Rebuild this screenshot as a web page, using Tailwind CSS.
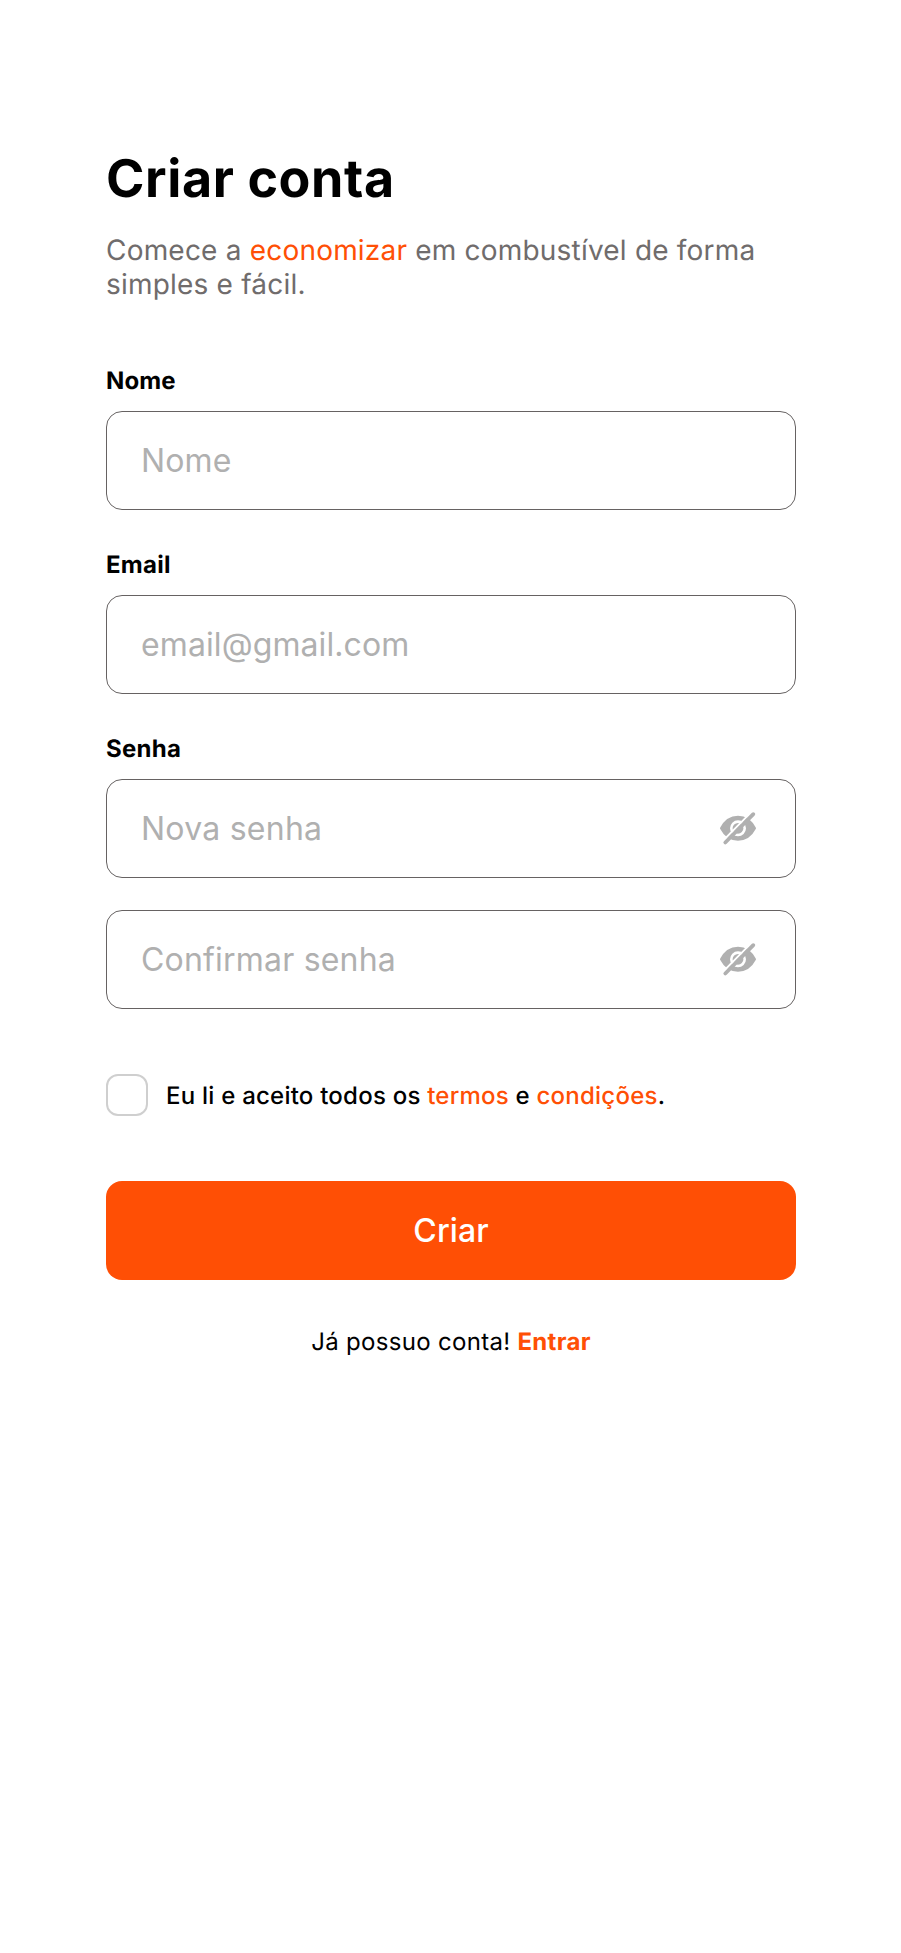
<!DOCTYPE html>
<html lang="pt-BR">
<head>
<meta charset="utf-8">
<title>Criar conta</title>
<script src="https://cdn.jsdelivr.net/npm/@tailwindcss/browser@4"></script>
</head>
<body class="bg-white font-['Inter',sans-serif] text-black [text-rendering:geometricPrecision]">
<main class="flex min-h-[1953px] flex-col pt-[147px] pr-[105px] pl-[106px]">
  <h1 class="w-fit text-[52px] leading-[63px] font-bold tracking-[0.6px]">Criar conta</h1>
  <p class="mt-[23px] w-[670px] text-[28px] leading-[34px] tracking-[0.2px] text-[#706c6c]">Comece a <span class="text-[#ff4f05]">economizar</span> em combustível de forma simples e fácil.</p>
  <form class="mt-[65px] flex flex-col">
    <label class="flex flex-col gap-4 text-[24px] leading-[29px] font-bold tracking-[0.15px]">Nome
      <input class="h-[99px] rounded-2xl border border-[#666262] px-[34px] text-[32px] font-normal tracking-[0.15px] placeholder:text-[#b0b0b0]" placeholder="Nome">
    </label>
    <label class="mt-10 flex flex-col gap-4 text-[24px] leading-[29px] font-bold tracking-[0.25px]">Email
      <input class="h-[99px] rounded-2xl border border-[#666262] px-[34px] text-[32px] font-normal tracking-[0.1px] placeholder:text-[#b0b0b0]" placeholder="email@gmail.com">
    </label>
    <div class="mt-10 flex flex-col">
      <span class="text-[24px] leading-[29px] font-bold tracking-[0.25px]">Senha</span>
      <div class="mt-4 flex h-[99px] items-center rounded-2xl border border-[#666262] pr-[39px] pl-[34px]">
        <input class="h-full min-w-0 flex-1 text-[32px] tracking-[0.25px] placeholder:text-[#b0b0b0]" placeholder="Nova senha">
        <svg class="h-8 w-9 overflow-visible" viewBox="0 0 36 32" fill="none"><path d="M1 15.300C5 7.500 10.500 3.800 18 3.800S31 7.500 35 15.300C31 23 25.500 26.700 18 26.700S5 23 1 15.300Z" fill="#b0b0b0" stroke="#b0b0b0" stroke-width="2" stroke-linejoin="round"/><circle cx="18" cy="15.300" r="6.700" stroke="#fff" stroke-width="2.600"/><path d="M3.300 27.500 31.300 -.8" stroke="#fff" stroke-width="2"/><path d="M5.300 29.500 33.300 1.200" stroke="#b0b0b0" stroke-width="3.800" stroke-linecap="round"/></svg>
      </div>
      <div class="mt-8 flex h-[99px] items-center rounded-2xl border border-[#666262] pr-[39px] pl-[34px]">
        <input class="h-full min-w-0 flex-1 text-[32px] tracking-[0.2px] placeholder:text-[#b0b0b0]" placeholder="Confirmar senha">
        <svg class="h-8 w-9 overflow-visible" viewBox="0 0 36 32" fill="none"><path d="M1 15.300C5 7.500 10.500 3.800 18 3.800S31 7.500 35 15.300C31 23 25.500 26.700 18 26.700S5 23 1 15.300Z" fill="#b0b0b0" stroke="#b0b0b0" stroke-width="2" stroke-linejoin="round"/><circle cx="18" cy="15.300" r="6.700" stroke="#fff" stroke-width="2.600"/><path d="M3.300 27.500 31.300 -.8" stroke="#fff" stroke-width="2"/><path d="M5.300 29.500 33.300 1.200" stroke="#b0b0b0" stroke-width="3.800" stroke-linecap="round"/></svg>
      </div>
    </div>
    <label class="mt-[65px] flex h-[42px] items-center gap-[18px] text-[24px] leading-[29px] font-medium tracking-[0.23px]">
      <input type="checkbox" class="size-[42px] appearance-none rounded-xl border-2 border-[#cfcfcf]">
      <span>Eu li e aceito todos os <a class="text-[#ff4f05]">termos</a> e <a class="text-[#ff4f05]">condições</a>.</span>
    </label>
    <button type="button" class="mt-[65px] h-[99px] rounded-2xl bg-[#ff4f05] text-[32px] font-medium tracking-[0.1px] text-white">Criar</button>
  </form>
  <p class="mt-[47px] text-center text-[24px] leading-[29px] tracking-[0.3px]">Já possuo conta! <a class="font-bold text-[#ff4f05]">Entrar</a></p>
</main>
</body>
</html>
